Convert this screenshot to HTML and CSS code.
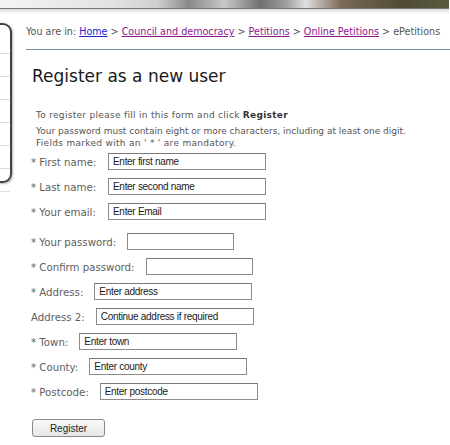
FILE: index.html
```html
<!DOCTYPE html>
<html lang="en">
  <head>
    <meta charset="UTF-8" />
    <meta name="viewport" content="width=device-width, initial-scale=1.0" />
    <title>ePetitions - Register</title>
    <link rel="stylesheet" href="styles.css">
  </head>
  <body>
    <div class="banner"></div>
    <div class="banner-shadow"></div>

    <div class="page">
      <div class="sidebar">
        <ul class="side-nav">
          <li></li>
          <li></li>
          <li></li>
          <li></li>
          <li></li>
          <li></li>
          <li></li>
        </ul>
      </div>

      <div class="content">
        <p class="breadcrumb">
          You are in: <a href="#" class="new">Home</a> &gt;
          <a href="#">Council and democracy</a> &gt;
          <a href="#">Petitions</a> &gt;
          <a href="#">Online Petitions</a> &gt; ePetitions
        </p>

        <h1>Register as a new user</h1>

        <div class="intro">
          <p class="wide">To register please fill in this form and click <strong>Register</strong></p>
          <p>Your password must contain eight or more characters, including at least one digit.<br>
            <span class="wide">Fields marked with an ' * ' are mandatory.</span></p>
        </div>

        <form class="register">
          <div class="row"><label class="fixed">* First name:</label><input type="text" value="Enter first name" /></div>
          <div class="row"><label class="fixed">* Last name:</label><input type="text" value="Enter second name" /></div>
          <div class="row"><label class="fixed">* Your email:</label><input type="text" value="Enter Email" /></div>
          <div class="row gap"><label>* Your password:</label><input type="password" class="short" /></div>
          <div class="row"><label>* Confirm password:</label><input type="password" class="short" /></div>
          <div class="row"><label>* Address:</label><input type="text" value="Enter address" /></div>
          <div class="row"><label>Address 2:</label><input type="text" value="Continue address if required" /></div>
          <div class="row"><label>* Town:</label><input type="text" value="Enter town" /></div>
          <div class="row"><label>* County:</label><input type="text" value="Enter county" /></div>
          <div class="row"><label>* Postcode:</label><input type="text" value="Enter postcode" /></div>

          <button type="button">Register</button>
        </form>
      </div>
    </div>
  </body>
</html>
```

FILE: styles.css
```css
* {
  margin: 0;
  padding: 0;
  box-sizing: border-box;
}

body {
  font-family: "DejaVu Sans", Verdana, sans-serif;
  font-size: 9px;
  color: #555;
  background: #fff;
  overflow: hidden;
}

.banner {
  height: 9px;
  width: 449px;
  background: linear-gradient(90deg, #f4f4f4 0%, #e2e2e2 25%, #d0d0d0 35%, #8a8a8a 42%, #c8c8c8 50%, #707070 58%, #a0a0a0 64%, #e0e0e0 68%, #7a6a55 76%, #4e4a35 90%, #5b5a3e 100%);
  border-bottom: 1px solid #777;
}

.banner-shadow {
  height: 5px;
  width: 449px;
  background: linear-gradient(#d8d8d8, #fff);
}

.page {
  display: flex;
  padding-top: 9px;
}

.sidebar {
  width: 26px;
  flex-shrink: 0;
}

.side-nav {
  list-style: none;
  width: 13px;
  height: 160px;
  margin-left: -1px;
  border: 2px solid #444;
  border-left: none;
  border-radius: 0 9px 9px 0;
  padding-top: 28px;
  box-shadow: 1px 1px 2px rgba(0, 0, 0, 0.3);
}

.side-nav li {
  height: 23px;
  border-top: 1px solid #dcdcdc;
}

.content {
  flex: 1;
}

.breadcrumb {
  font-size: 9.6px;
  line-height: 12px;
  padding: 3px 0 11px;
  border-bottom: 1px solid #7a8ea3;
  white-space: nowrap;
  color: #555;
}

.breadcrumb a {
  color: #8a1a8a;
}

.breadcrumb a.new {
  color: #2222cc;
}

h1 {
  font-weight: normal;
  font-size: 17px;
  color: #1a1a1a;
  margin: 16px 0 0 6px;
  line-height: 20px;
}

.intro {
  margin: 23px 0 0 10px;
  line-height: 12px;
}

.intro p {
  margin-bottom: 4px;
}

.intro .wide {
  letter-spacing: 0.3px;
}

.intro strong {
  color: #333;
}

.register {
  margin-left: 5px;
}

.row {
  display: flex;
  align-items: center;
  height: 17px;
  margin-bottom: 8px;
}

.row.gap {
  margin-top: 13px;
}

.row label {
  font-size: 10.2px;
  color: #5e5e5e;
  margin-right: 11px;
  padding-top: 2px;
}

.row label.fixed {
  width: 77px;
  margin-right: 0;
}

.row input {
  width: 158px;
  height: 17px;
  border: 1px solid #8c8c8c;
  border-top-color: #7a7a7a;
  font-family: "Liberation Sans", Arial, sans-serif;
  font-size: 10px;
  letter-spacing: -0.3px;
  color: #1a1a1a;
  padding: 0 4px;
  outline: none;
}

.row input.short {
  width: 107px;
}

button {
  margin: 11px 0 0 1px;
  width: 73px;
  height: 18px;
  font-family: "Liberation Sans", Arial, sans-serif;
  font-size: 10px;
  color: #222;
  border: 1px solid #8a8a8a;
  border-radius: 3px;
  background: linear-gradient(#fafafa, #e6e6e6);
}
```
